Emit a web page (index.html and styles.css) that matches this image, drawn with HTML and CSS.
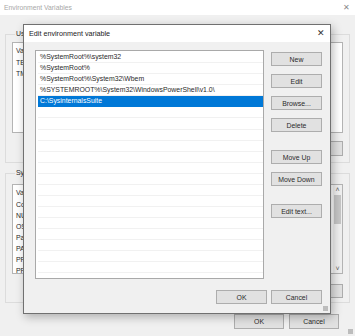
FILE: index.html
```html
<!DOCTYPE html>
<html>
<head>
<meta charset="utf-8">
<link rel="stylesheet" href="styles.css">
</head>
<body>
<div class="win">
  <div class="win-title"><span>Environment Variables</span><span class="x">✕</span></div>
  <div class="win-body">
    <fieldset class="group g-user">
      <legend>User variables</legend>
      <div class="lv lv-user">
        <div class="lv-head"><span class="c1">Variable</span></div>
        <div class="lv-row"><span class="c1">TEMP</span></div>
        <div class="lv-row"><span class="c1">TMP</span></div>
      </div>
      <div class="grp-btns"><span class="btn bb">New...</span><span class="btn bb">Edit...</span><span class="btn bb">Delete</span></div>
    </fieldset>
    <fieldset class="group g-sys">
      <legend>System variables</legend>
      <div class="lv lv-sys">
        <div class="lv-main">
          <div class="lv-head"><span class="c1">Variable</span></div>
          <div class="lv-row"><span class="c1">ComSpec</span></div>
          <div class="lv-row"><span class="c1">NUMBER_OF_PROCESSORS</span></div>
          <div class="lv-row"><span class="c1">OS</span></div>
          <div class="lv-row"><span class="c1">Path</span></div>
          <div class="lv-row"><span class="c1">PATHEXT</span></div>
          <div class="lv-row"><span class="c1">PROCESSOR_ARCHITECTURE</span></div>
          <div class="lv-row"><span class="c1">PROCESSOR_IDENTIFIER</span></div>
        </div>
        <div class="sb">
          <span class="sb-arrow">&#708;</span>
          <span class="sb-track"><span class="sb-thumb"></span></span>
          <span class="sb-arrow">&#709;</span>
        </div>
      </div>
      <div class="grp-btns g2"><span class="btn bb">New...</span><span class="btn bb">Edit...</span><span class="btn bb">Delete</span></div>
    </fieldset>
    <div class="win-foot"><span class="btn bf">OK</span><span class="btn bf">Cancel</span></div>
  </div>
  <span class="grip grip-win"></span>

  <div class="dlg">
    <div class="dlg-title"><span>Edit environment variable</span><span class="x dx">✕</span></div>
    <div class="dlg-body">
      <div class="dlg-main">
        <div class="list">
          <div class="row">%SystemRoot%\system32</div>
          <div class="row">%SystemRoot%</div>
          <div class="row">%SystemRoot%\System32\Wbem</div>
          <div class="row">%SYSTEMROOT%\System32\WindowsPowerShell\v1.0\</div>
          <div class="row sel">C:\SysinternalsSuite</div>
          <div class="row"></div><div class="row"></div><div class="row"></div><div class="row"></div>
          <div class="row"></div><div class="row"></div><div class="row"></div><div class="row"></div>
          <div class="row"></div><div class="row"></div><div class="row"></div><div class="row"></div>
          <div class="row"></div><div class="row"></div><div class="row"></div>
        </div>
        <div class="side">
          <span class="btn">New</span>
          <span class="btn">Edit</span>
          <span class="btn">Browse...</span>
          <span class="btn">Delete</span>
          <span class="btn sp">Move Up</span>
          <span class="btn">Move Down</span>
          <span class="btn sp">Edit text...</span>
        </div>
      </div>
      <div class="dlg-foot"><span class="btn">OK</span><span class="btn">Cancel</span></div>
    </div>
    <span class="grip grip-dlg"></span>
  </div>
</div>
</body>
</html>
```

FILE: styles.css
```css
* { box-sizing: border-box; }
html, body { margin: 0; padding: 0; }
body {
  width: 355px;
  height: 336px;
  overflow: hidden;
  font-family: "Liberation Sans", Arial, sans-serif;
  font-size: 6.9px;
  color: #2a2a2a;
}
.win {
  position: relative;
  width: 355px;
  height: 336px;
  background: #f0f0f0;
  display: flex;
  flex-direction: column;
}
.win-title {
  height: 15px;
  flex: none;
  background: #fff;
  display: flex;
  align-items: center;
  justify-content: space-between;
  padding: 0 5px 0 4px;
  color: #a8a8a8;
  font-size: 6.8px;
}
.x { font-size: 8px; color: #8a8a8a; line-height: 1; }
.win-body {
  display: flex;
  flex-direction: column;
  padding: 0 5px 0 5px;
}
.group {
  margin: 0;
  border: 1px solid #dcdcdc;
  min-width: 0;
}
.group legend {
  padding: 0 1px;
  margin-left: 3px;
  line-height: 10px;
  height: 10px;
  color: #2a2a2a;
  white-space: nowrap;
}
.g-user { margin-top: 14px; padding: 3px 6px 6px 6px; }
.g-sys { margin-top: 5px; padding: 6px 6px 4px 6px; }
.lv {
  background: #fff;
  border: 1px solid #b4b4b4;
}
.lv-user { height: 91px; padding-left: 3px; }
.lv-sys { height: 90px; display: flex; padding-left: 3px; }
.lv-main { flex: 1; }
.lv-head {
  height: 14px;
  display: flex;
  align-items: center;
  color: #333;
}
.lv-row {
  height: 11px;
  display: flex;
  align-items: center;
}
.c1 { white-space: nowrap; }
.sb {
  width: 9px;
  flex: none;
  display: flex;
  flex-direction: column;
  align-items: center;
  background: #f0f0f0;
}
.sb-arrow { height: 9px; font-size: 7px; line-height: 9px; color: #606060; }
.sb-track { flex: 1; width: 100%; padding: 1px 1px; }
.sb-thumb { display: block; height: 29px; background: #c6c6c6; }
.grp-btns {
  display: flex;
  justify-content: flex-end;
  gap: 6px;
  margin-top: 8px;
}
.grp-btns.g2 { margin-top: 10px; }
.btn {
  display: flex;
  align-items: center;
  justify-content: center;
  background: #e1e1e1;
  border: 1px solid #adadad;
  color: #2a2a2a;
  white-space: nowrap;
}
.bb { width: 50px; height: 15px; }
.g2 .bb { height: 14px; }
.win-foot {
  display: flex;
  justify-content: flex-end;
  gap: 5px;
  margin-top: 11px;
  padding-right: 11px;
}
.bf { width: 50px; height: 15px; }

.dlg {
  position: absolute;
  left: 23px;
  top: 24px;
  width: 308px;
  height: 290px;
  border: 1px solid #707070;
  background: #f0f0f0;
  box-shadow: 2px 3px 9px rgba(0,0,0,0.28);
  display: flex;
  flex-direction: column;
}
.dlg-title {
  height: 17px;
  flex: none;
  background: #fff;
  display: flex;
  align-items: center;
  justify-content: space-between;
  padding: 0 5px 0 5px;
  color: #1a1a1a;
  font-size: 7.2px;
}
.dx { color: #333; font-size: 8.5px; }
.dlg-body {
  flex: 1;
  display: flex;
  flex-direction: column;
  padding: 8px 8px 0 11px;
}
.dlg-main { display: flex; gap: 7px; }
.list {
  width: 229px;
  height: 229px;
  flex: none;
  background: #fff;
  border: 1px solid #a9a9a9;
  padding: 1.3px 0 0 2px;
  overflow: hidden;
}
.row {
  height: 11.04px;
  border-bottom: 1px solid #f1f1f1;
  padding-left: 2px;
  line-height: 10px;
  white-space: nowrap;
  color: #2a2a2a;
}
.row.sel { background: #0078d7; color: #fff; border-bottom-color: #0078d7; }
.side {
  width: 51px;
  display: flex;
  flex-direction: column;
  gap: 8px;
  padding-top: 2px;
}
.side .btn { height: 14px; }
.side .sp { margin-top: 10px; }
.dlg-foot {
  display: flex;
  justify-content: flex-end;
  gap: 4px;
  margin-top: 11px;
}
.dlg-foot .btn { width: 51px; height: 14px; }
.grip {
  position: absolute;
  width: 5px;
  height: 5px;
  background-image: radial-gradient(circle, #a0a0a0 0.6px, transparent 0.9px);
  background-size: 2px 2px;
}
.grip-dlg { right: 2px; bottom: 2px; }
.grip-win { right: 2px; bottom: 2px; }
```
